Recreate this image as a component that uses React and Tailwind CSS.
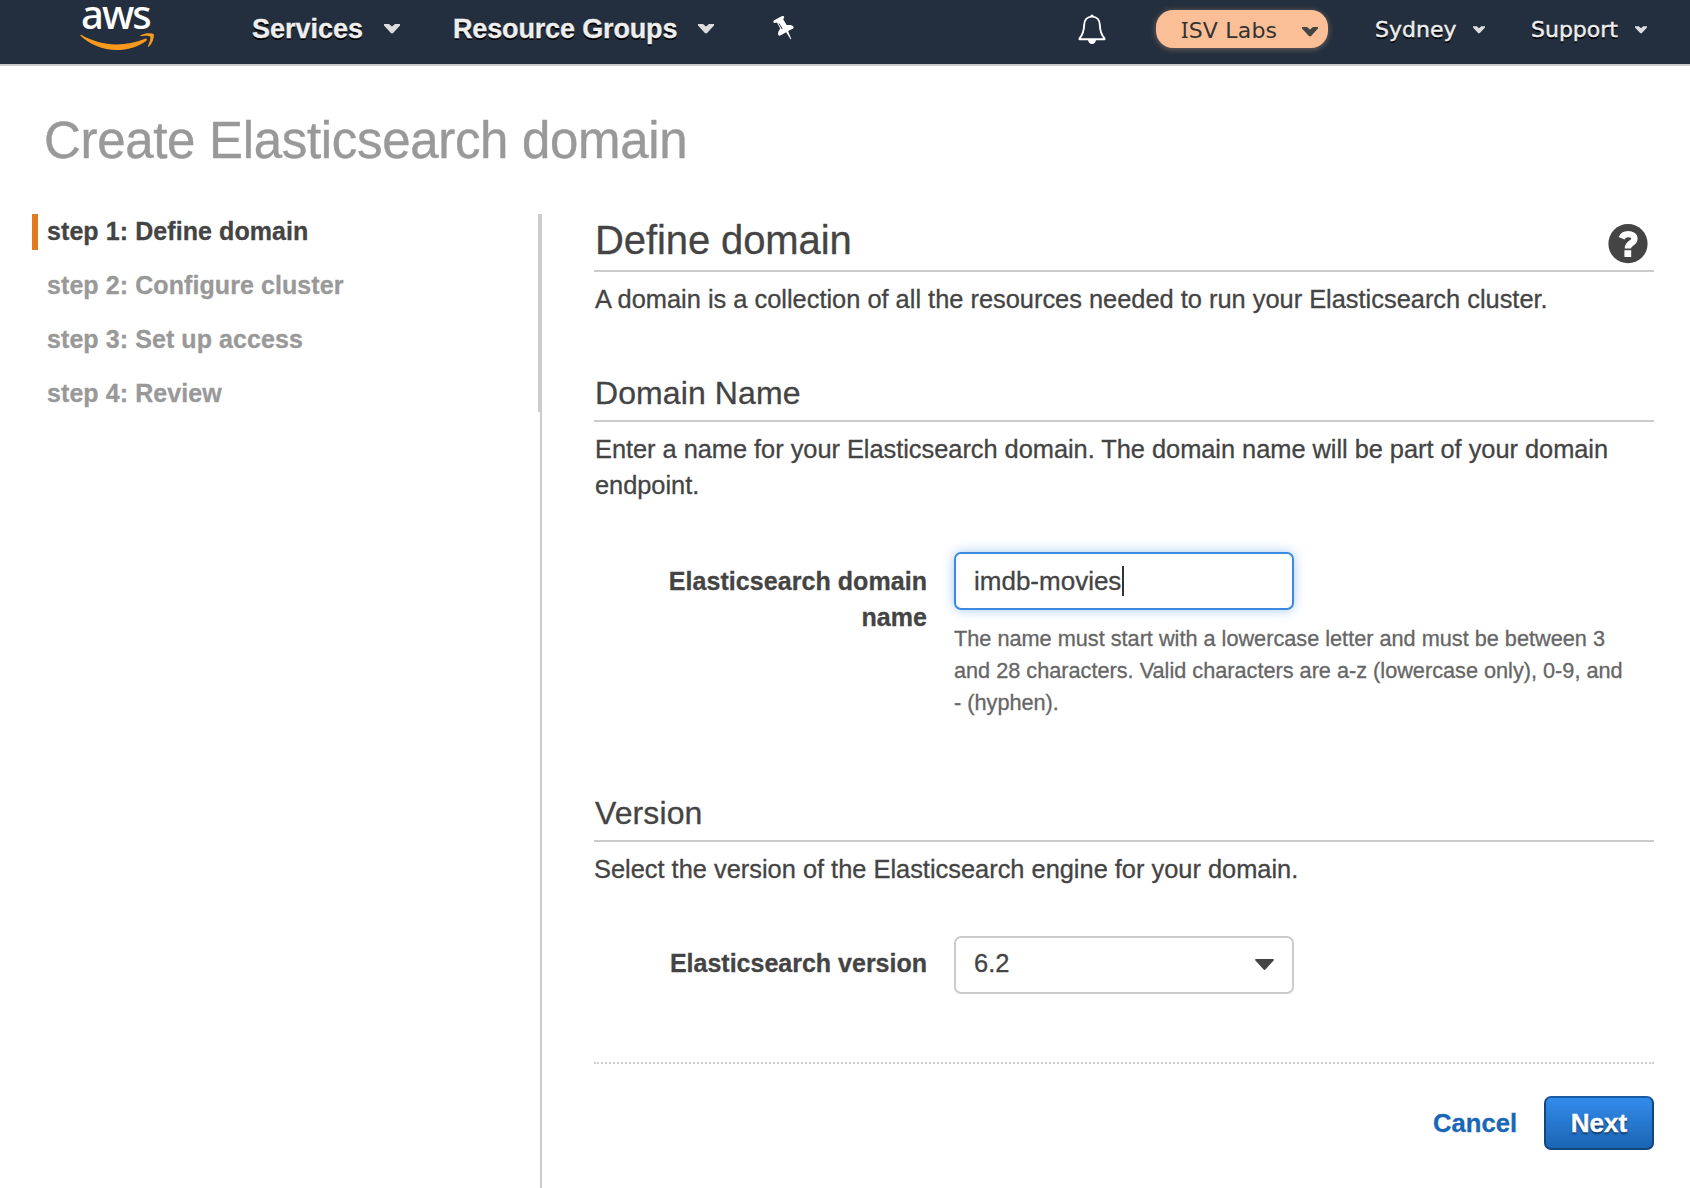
import React from "react";

function Chevron({ className }) {
  return (
    <svg viewBox="0 0 16 10" className={className} fill="currentColor">
      <path d="M0 0h5L8 2.600 11 0h5v1.500L8.900 9.300H7.100L0 1.500z" />
    </svg>
  );
}

function AwsLogo() {
  return (
    <div className="ml-20 h-[58px] w-[74px]">
      <div className="h-[27px] pt-px pl-px font-['Noto_Sans',sans-serif] text-[40px] leading-[26px] font-medium tracking-[-2px] text-white">
        aws
      </div>
      <svg viewBox="0 0 74 18" className="mt-[6px] h-[18px] w-[74px]" fill="#f8991d">
        <path d="M.3 2.6C.1 1.9.8 1.5 1.6 2 12 8 24 11.4 36.500 11.400c9.500 0 19.500-2 28.500-5.700 1.500-.6 2.700.9 1.300 2C58.500 13.800 47 17.100 37 17.100 22.500 17.100 9.600 11.500.3 2.600z" />
        <path d="M60.600 2.300C64.500-.3 72-.3 73.600.9c.9 1.700-.4 8.700-4.600 12.600-.7.600-1.300.3-1-.5 1-2.600 3.200-8 2-9.400-1-1.300-6.400-.7-8.900-.4-.8.1-.9-.6-.5-.9z" />
      </svg>
    </div>
  );
}

function Pin() {
  return (
    <svg viewBox="0 0 22 24" className="h-6 w-[22px]" fill="#fff">
      <path d="M.4 6.300C0 5 1.200 4.300 2.500 3.600L8.300.5C9.800-.3 11 0 11.200 1c.2 1-.9 1.500-1 2.300l3.300 5.400c.5.700 2 .2 3.600.3 2 .1 3.700 1.200 3.500 2.700-.1.600-.8.900-1.400 1.200l-4.100 2.100L18.300 23l-.7.300-4.500-7.100-5.300 3c-1 .5-1.900.7-2.300.1-.9-1.400-.3-3.600.7-5.100.5-.8 1.100-1.500.8-2.200L3.900 6.600C3 6.500 1 7.700.4 6.300z" />
      <path d="M6 7.500l3.300 5.600" stroke="#232f3e" strokeWidth="1" fill="none" />
    </svg>
  );
}

function Bell() {
  return (
    <svg viewBox="0 0 28 31" className="h-[31px] w-7" fill="none">
      <path
        d="M14 2.600c-5 0-7.600 3.600-7.800 8.200-.2 5.500-.8 9.200-4.600 13.600-.4.500-.3.900.3.900h24.200c.6 0 .7-.4.300-.9-3.800-4.400-4.400-8.100-4.600-13.600C21.600 6.200 19 2.600 14 2.600z"
        stroke="#fff"
        strokeWidth="1.900"
        strokeLinejoin="round"
      />
      <path d="M12.300 2.500a1.700 2.100 0 0 1 3.400 0z" fill="#fff" />
      <path d="M10 25.500h8a4 4.500 0 0 1-8 0z" fill="#fff" />
    </svg>
  );
}

function HelpIcon() {
  return (
    <svg viewBox="0 0 40 40" className="h-10 w-10">
      <circle cx="20" cy="19.700" r="19.600" fill="#444" />
      <path d="M13.600 14.200c1.100-2.700 3.400-4.100 6.400-4.100 3.900 0 6.400 1.700 6.400 4.600 0 4.600-6.600 4.300-6.600 9.700" stroke="#fff" strokeWidth="6.400" fill="none" />
      <rect x="16.400" y="26.200" width="6.800" height="6.800" fill="#fff" />
    </svg>
  );
}

function NavBar() {
  return (
    <header className="flex h-[66px] items-start border-b-2 border-[#ccc] bg-[#232f3e] text-[#eee]">
      <AwsLogo />
      <nav className="flex h-[58px] items-center text-[27px] leading-8 font-bold [-webkit-text-stroke:0.3px] [text-shadow:0_2px_0_#000]">
        <span className="ml-[98px] w-[132px]">Services</span>
        <Chevron className="h-[10px] w-4 text-[#ddd]" />
        <span className="ml-[53px] w-[245px] tracking-[-0.15px]">Resource Groups</span>
        <Chevron className="h-[10px] w-4 text-[#ddd]" />
        <span className="ml-[59px] -mt-[2px]">
          <Pin />
        </span>
      </nav>
      <div className="ml-auto flex h-[60px] items-center pr-[43px] font-['DejaVu_Sans',sans-serif] text-[22px] leading-8">
        <span className="mr-[50px] -mt-px">
          <Bell />
        </span>
        <div className="-mt-[2px] flex h-[38px] w-[172px] items-center justify-between rounded-[17px] bg-[#fbbf97] pr-[10px] pl-[25px] text-[#333] shadow-[0_1px_6px_rgba(251,191,151,0.4)]">
          <span className="pt-[2px] tracking-[0.2px]">
            <span className="font-['Noto_Sans',sans-serif]">I</span>SV Labs
          </span>
          <Chevron className="mt-[6px] h-[10px] w-4 text-[#444]" />
        </div>
        <span className="ml-[47px] w-[98px] [-webkit-text-stroke:0.4px] [text-shadow:0_2px_0_#000]">
          Sydney
        </span>
        <Chevron className="h-[8px] w-3 text-[#ddd]" />
        <span className="ml-[46px] w-[104px] [-webkit-text-stroke:0.4px] [text-shadow:0_2px_0_#000]">
          Support
        </span>
        <Chevron className="h-[8px] w-3 text-[#ddd]" />
      </div>
    </header>
  );
}

const steps = [
  "step 1: Define domain",
  "step 2: Configure cluster",
  "step 3: Set up access",
  "step 4: Review",
];

function Steps() {
  return (
    <aside className="flex w-[510px] flex-col">
      <ol className="flex h-[198px] flex-col gap-[18px] border-r-4 border-[#ccc] text-[25px] leading-[34px] font-bold tracking-[0.08px] [-webkit-text-stroke:0.3px]">
        {steps.map((step, i) => (
          <li
            key={step}
            className={
              i === 0
                ? "h-9 border-l-[6px] border-[#e07b20] pl-[9px] text-[#444]"
                : "h-9 border-l-[6px] border-transparent pl-[9px] text-[#999]"
            }
          >
            {step}
          </li>
        ))}
      </ol>
      <div className="flex-1 border-r-2 border-[#ccc]" />
    </aside>
  );
}

function SectionTitle({ children }) {
  return (
    <h3 className="border-b-2 border-[#ccc] pb-[7px] pl-px text-[32px] leading-10 tracking-[0.1px]">
      {children}
    </h3>
  );
}

function Main() {
  return (
    <main className="ml-[52px] w-[1060px] pt-1 text-[25.4px] leading-9 text-[#444] [-webkit-text-stroke:0.3px]">
      <div className="flex h-[54px] justify-between border-b-2 border-[#ccc] pr-[6px] pl-px">
        <h2 className="text-[40px] leading-[44px] tracking-[-0.1px]">Define domain</h2>
        <span className="mt-[6px]">
          <HelpIcon />
        </span>
      </div>
      <p className="mt-[9px] pl-px">
        A domain is a collection of all the resources needed to run your Elasticsearch cluster.
      </p>

      <section className="mt-14">
        <SectionTitle>Domain Name</SectionTitle>
        <p className="mt-[9px] pl-px tracking-[-0.03px]">
          Enter a name for your Elasticsearch domain. The domain name will be part of your domain
          endpoint.
        </p>
        <div className="mt-[49px] flex">
          <label className="mr-[27px] w-[333px] pt-[11px] pl-10 text-right text-[25px] font-bold tracking-[0.06px]">
            Elasticsearch domain name
          </label>
          <div className="w-[672px]">
            <div className="flex h-[58px] w-[340px] items-center rounded-[7px] border-2 border-[#3a8bdf] bg-white pl-[18px] text-[26px] shadow-[0_0_12px_rgba(58,139,223,0.45)]">
              imdb-movies
              <span className="ml-px h-[30px] w-[2px] bg-[#333]" />
            </div>
            <p className="mt-[13px] text-[21.7px] leading-8 text-[#666]">
              The name must start with a lowercase letter and must be between 3 and 28 characters.
              Valid characters are a-z (lowercase only), 0-9, and - (hyphen).
            </p>
          </div>
        </div>
      </section>

      <section className="mt-[74px]">
        <SectionTitle>Version</SectionTitle>
        <p className="mt-[9px]">Select the version of the Elasticsearch engine for your domain.</p>
        <div className="mt-[49px] flex">
          <label className="mr-[27px] w-[333px] pt-[9px] text-right text-[25px] font-bold">
            Elasticsearch version
          </label>
          <div className="flex h-[58px] w-[340px] items-center justify-between rounded-[7px] border-2 border-[#ccc] bg-white pr-[18px] pb-1 pl-[18px] text-[25.5px]">
            6.2
            <svg viewBox="0 0 19 11" className="mt-[3px] h-[11px] w-[19px]" fill="#444">
              <path d="M1.200 0h16.600c1 0 1.400.9.800 1.600l-8.200 8.900c-.5.600-1.300.6-1.800 0L.4 1.600C-.2.9.2 0 1.200 0z" />
            </svg>
          </div>
        </div>
      </section>

      <footer className="mt-[68px] flex h-[88px] items-end justify-end border-t-2 border-dotted border-[#ccc] text-[26px] font-bold">
        <a className="mr-[27px] pb-[9px] text-[25.6px] text-[#1a67b8]">Cancel</a>
        <button className="h-[54px] w-[110px] rounded-[7px] border-2 border-[#12477e] border-t-[#1a5da6] bg-linear-to-b from-[#338ceb] to-[#1a65b3] text-white [text-shadow:0_2px_2px_rgba(0,0,0,0.55)]">
          Next
        </button>
      </footer>
    </main>
  );
}

export default function App() {
  return (
    <div className="flex h-[1188px] w-[1690px] flex-col overflow-hidden bg-white font-['Liberation_Sans',Arial,sans-serif]">
      <NavBar />
      <h1 className="mt-[44px] ml-[44px] text-[51px] leading-[61px] tracking-[-0.32px] text-[#999] [-webkit-text-stroke:0.4px]">
        Create Elasticsearch domain
      </h1>
      <div className="mt-[43px] flex flex-1 pl-8">
        <Steps />
        <Main />
      </div>
    </div>
  );
}
